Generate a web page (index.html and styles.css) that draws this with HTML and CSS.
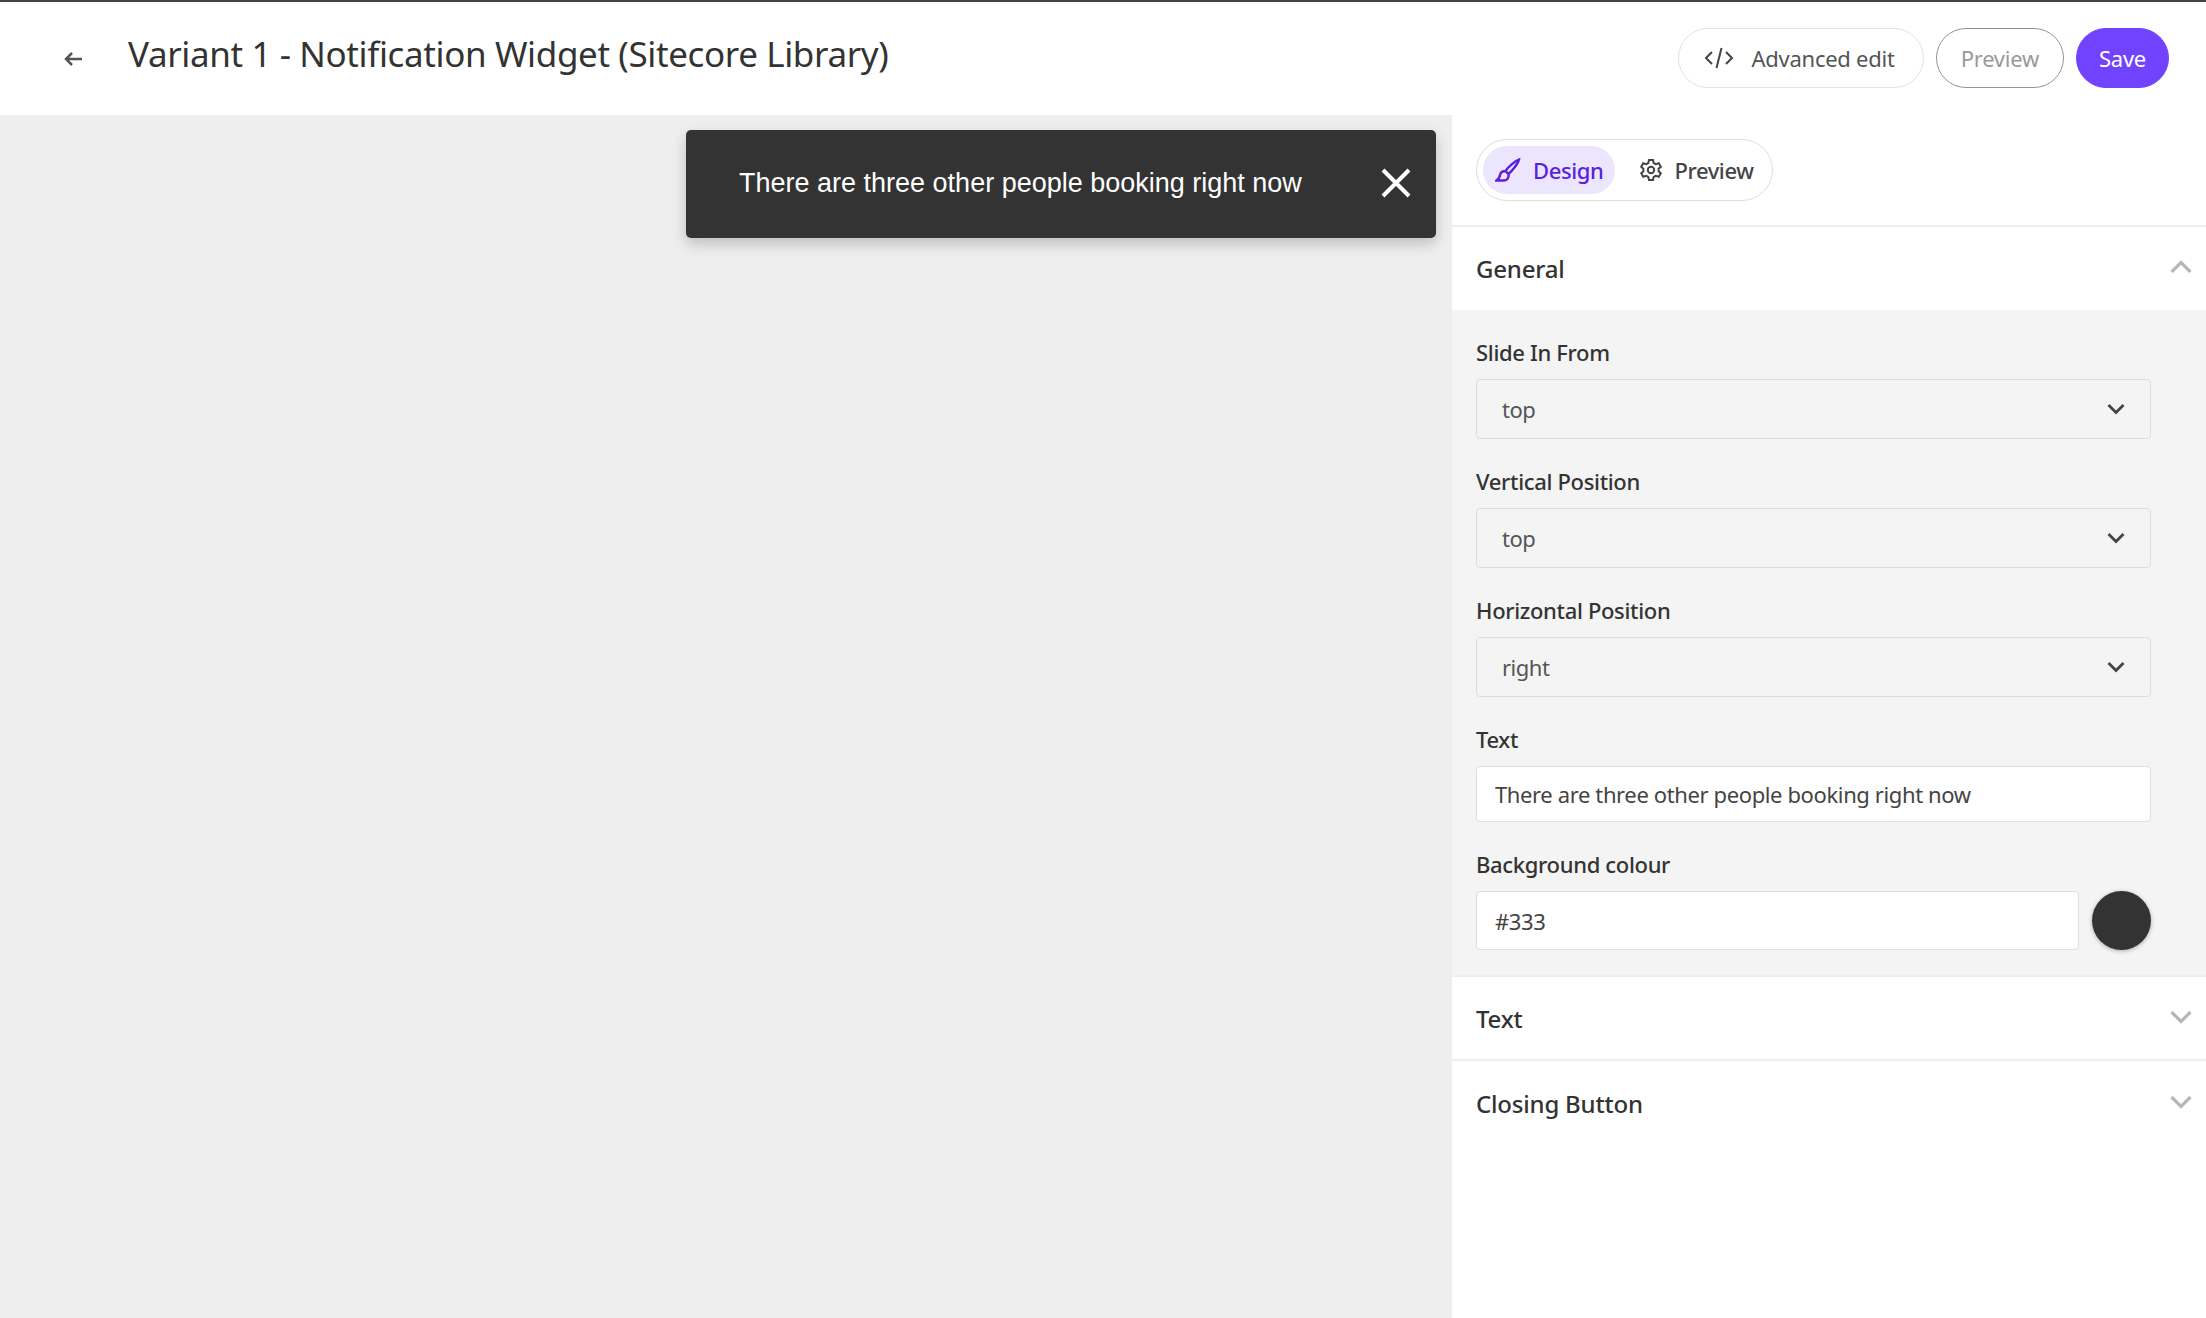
FILE: index.html
```html
<!DOCTYPE html>
<html lang="en">
<head>
    <meta charset="UTF-8">
    <meta name="viewport" content="width=device-width, initial-scale=1.0">
    <title>Variant 1 - Notification Widget (Sitecore Library)</title>
    <link rel="stylesheet" href="styles.css">
</head>
<body>
    <!-- Top bar -->
    <header class="top-bar">
        <a class="back-link" href="#" aria-label="Back">
            <svg width="18" height="14" viewBox="0 0 18 14"><path d="M18 7H2M8 1L2 7l6 6" fill="none" stroke="#555" stroke-width="2.500"/></svg>
        </a>
        <h1 class="page-title">Variant 1 - Notification Widget (Sitecore Library)</h1>
        <div class="top-actions">
            <button class="pill pill-code">
                <svg width="30" height="24" viewBox="0 0 30 24"><path d="M8 6l-6 6 6 6M22 6l6 6-6 6M17.500 2l-5 20" fill="none" stroke="#444" stroke-width="2"/></svg>
                Advanced edit
            </button>
            <button class="pill pill-preview">Preview</button>
            <button class="pill pill-save">Save</button>
        </div>
    </header>

    <div class="workspace">
        <!-- Canvas -->
        <main class="canvas">
            <div class="toast">
                <span class="toast-text">There are three other people booking right now</span>
                <svg class="toast-close" width="30" height="30" viewBox="0 0 30 30"><path d="M2 2l26 26M28 2L2 28" fill="none" stroke="#fff" stroke-width="4"/></svg>
            </div>
        </main>

        <!-- Side panel -->
        <aside class="panel">
            <div class="tabs-row">
                <div class="tabs">
                    <a class="tab tab-active" href="#">
                        <svg width="26" height="24" viewBox="0 0 26 24"><path d="M24 1.500C20 3 13 9 10.500 13l3 3C17 13 23 6 24 1.500zM10.500 13c-3 0-5 1.500-5.500 4-.2 1.500-1 4-3.500 5.500H9c3.500 0 5-3 4.500-6.500" fill="none" stroke="#5a1fe0" stroke-width="2.400"/></svg>
                        Design
                    </a>
                    <a class="tab tab-plain" href="#">
                        <svg width="24" height="24" viewBox="0 0 24 24" fill="none" stroke="#444" stroke-width="2"><circle cx="12" cy="12" r="3.200"/><path d="M10 2h4l.7 3 2.100 1.200 3-.9 2 3.400-2.200 2.100v2.400l2.200 2.100-2 3.400-3-.9L14.700 19 14 22h-4l-.7-3-2.100-1.200-3 .9-2-3.400 2.200-2.100v-2.400L2.200 8.700l2-3.400 3 .9L9.300 5z"/></svg>
                        Preview
                    </a>
                </div>
            </div>

            <section class="section-head">
                <span>General</span>
                <svg class="chevron" width="22" height="13" viewBox="0 0 22 13"><path d="M1.500 12L11 2.500l9.500 9.500" fill="none" stroke="#b4b8b8" stroke-width="3.200"/></svg>
            </section>

            <section class="section-body">
                <label class="field-label">Slide In From</label>
                <div class="select">top <svg width="18" height="12" viewBox="0 0 18 12"><path d="M1.500 2L9 9.500 16.500 2" fill="none" stroke="#444" stroke-width="2.800"/></svg></div>

                <label class="field-label">Vertical Position</label>
                <div class="select">top <svg width="18" height="12" viewBox="0 0 18 12"><path d="M1.500 2L9 9.500 16.500 2" fill="none" stroke="#444" stroke-width="2.800"/></svg></div>

                <label class="field-label">Horizontal Position</label>
                <div class="select">right <svg width="18" height="12" viewBox="0 0 18 12"><path d="M1.500 2L9 9.500 16.500 2" fill="none" stroke="#444" stroke-width="2.800"/></svg></div>

                <label class="field-label">Text</label>
                <input class="text-input" type="text" value="There are three other people booking right now">

                <label class="field-label field-label-bg">Background colour</label>
                <div class="colour-row">
                    <input class="text-input colour-input" type="text" value="#333">
                    <span class="swatch"></span>
                </div>
            </section>

            <section class="section-head section-closed">
                <span>Text</span>
                <svg class="chevron" width="22" height="13" viewBox="0 0 22 13"><path d="M1.500 1L11 10.500 20.500 1" fill="none" stroke="#b4b8b8" stroke-width="3.200"/></svg>
            </section>
            <section class="section-head section-closed">
                <span>Closing Button</span>
                <svg class="chevron" width="22" height="13" viewBox="0 0 22 13"><path d="M1.500 1L11 10.500 20.500 1" fill="none" stroke="#b4b8b8" stroke-width="3.200"/></svg>
            </section>
        </aside>
    </div>
</body>
</html>
```

FILE: styles.css
```css
* {
    box-sizing: border-box;
}

body {
    margin: 0;
    height: 100vh;
    display: flex;
    flex-direction: column;
    overflow: hidden;
    font-family: "Noto Sans", "Open Sans", sans-serif;
    color: #333;
    background-color: white;
}

.top-bar {
    display: flex;
    align-items: center;
    height: 115px;
    border-top: 2px solid #444;
    padding: 0 37px 0 64px;
    background-color: white;
}

.back-link {
    display: flex;
    margin-top: 1px;
}

.page-title {
    margin: -11px 0 0 46px;
    font-size: 35px;
    font-weight: 400;
    letter-spacing: -0.38px;
    color: #333;
}

.top-actions {
    display: flex;
    gap: 12px;
    margin: -2px 0 0 auto;
}

.pill {
    display: flex;
    align-items: center;
    height: 60px;
    padding: 0 24px;
    border-radius: 30px;
    border: 1px solid #e2e2e2;
    background-color: white;
    font-family: inherit;
    font-size: 22px;
    letter-spacing: -0.25px;
    color: #555;
}

.pill-code {
    gap: 17px;
    padding: 0 28px 0 25px;
}

.pill-preview {
    border-color: #949494;
    color: #999;
}

.pill-save {
    padding: 0 22px;
    border-color: #7143ff;
    background-color: #7143ff;
    color: white;
}

.workspace {
    flex: 1;
    display: flex;
}

.canvas {
    flex: 1;
    display: flex;
    justify-content: flex-end;
    align-items: flex-start;
    padding: 15px 16px 0 0;
    background-color: #eee;
}

.toast {
    display: flex;
    align-items: center;
    justify-content: space-between;
    width: 750px;
    height: 108px;
    padding: 0 25px 2px 53px;
    border-radius: 5px;
    background-color: #333;
    box-shadow: 0 6px 14px rgba(0, 0, 0, 0.2);
}

.toast-text {
    font-family: "Liberation Sans", Arial, sans-serif;
    font-size: 27px;
    color: white;
}

.panel {
    width: 754px;
    background-color: white;
}

.tabs-row {
    height: 112px;
    padding: 24px 24px 0;
    border-bottom: 2px solid #eee;
}

.tabs {
    display: inline-flex;
    align-items: center;
    gap: 24px;
    height: 62px;
    padding: 0 18px 0 6px;
    border: 1px solid #ddd;
    border-radius: 31px;
}

.tab {
    display: flex;
    align-items: center;
    gap: 12px;
    height: 48px;
    font-size: 22px;
    font-weight: 500;
    letter-spacing: -0.4px;
    color: #444;
    text-decoration: none;
}

.tab-plain {
    gap: 11px;
}

.tab-active {
    padding: 0 12px;
    border-radius: 24px;
    background-color: #ebe6fd;
    color: #5a1fe0;
}

.section-head {
    display: flex;
    align-items: center;
    justify-content: space-between;
    height: 83px;
    padding: 0 14px 0 24px;
    font-size: 24px;
    font-weight: 500;
    letter-spacing: -0.2px;
    color: #333;
}

.section-head .chevron {
    margin-top: -4px;
}

.section-closed {
    height: 84px;
    border-bottom: 2px solid #eee;
}

.section-closed .chevron {
    margin-top: -2px;
}

.section-closed:last-child {
    border-bottom: none;
}

.section-body {
    padding: 28px 55px 25px 24px;
    background-color: #f4f4f4;
    border-bottom: 2px solid #eee;
}

.field-label {
    display: block;
    margin-bottom: 11px;
    height: 30px;
    line-height: 28px;
    font-size: 22px;
    font-weight: 500;
    letter-spacing: -0.33px;
    color: #333;
}

.select {
    display: flex;
    align-items: center;
    justify-content: space-between;
    height: 60px;
    margin-bottom: 28px;
    padding: 0 25px;
    border: 1px solid #ddd;
    border-radius: 4px;
    font-size: 22px;
    letter-spacing: -0.5px;
    color: #555;
}

.text-input {
    display: block;
    width: 100%;
    height: 56px;
    padding: 0 18px;
    border: 1px solid #ddd;
    border-radius: 4px;
    background-color: white;
    font-family: inherit;
    font-size: 22px;
    letter-spacing: -0.38px;
    color: #444;
}

.field-label-bg {
    margin-top: 28px;
}

.colour-row {
    display: flex;
    align-items: center;
    gap: 13px;
}

.colour-input {
    flex: 1;
    height: 59px;
}

.swatch {
    width: 59px;
    height: 59px;
    border-radius: 50%;
    background-color: #333;
    box-shadow: 0 1px 4px rgba(0, 0, 0, 0.3);
}
```
